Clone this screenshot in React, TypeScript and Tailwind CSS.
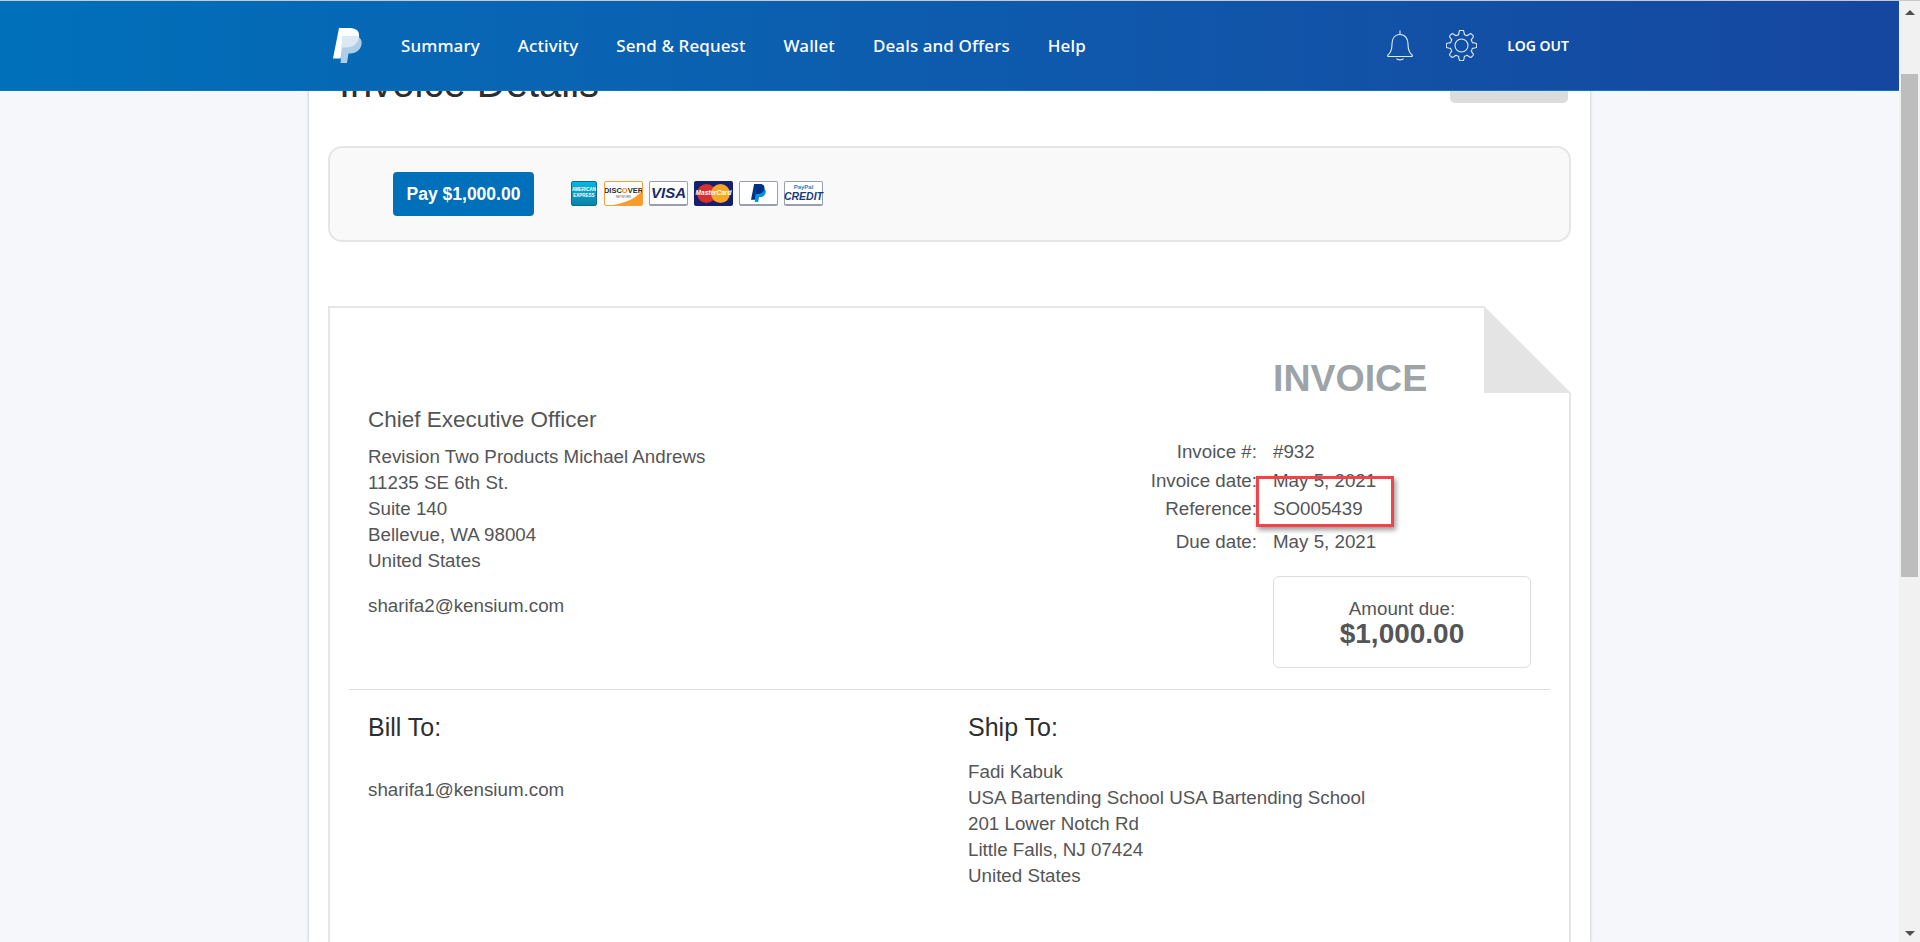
const navItems = ['Summary', 'Activity', 'Send & Request', 'Wallet', 'Deals and Offers', 'Help'];
const senderLines = ['Revision Two Products Michael Andrews', '11235 SE 6th St.', 'Suite 140', 'Bellevue, WA 98004', 'United States'];
const shipLines = ['Fadi Kabuk', 'USA Bartending School USA Bartending School', '201 Lower Notch Rd', 'Little Falls, NJ 07424', 'United States'];

const frontP = 'M6 0H17C23.5 0 27 3.5 26 9.5C25 15.5 20 19.5 13.5 19.5H9.5L7.5 30.5H0Z';
const rearP = 'M9.5 8H20.5C26 8 29.5 11 28.5 16.5C27.5 22 23 25.5 17.5 25.5H15.5L14 35H7.5Z';

// 8 rounded teeth, same outline as the settings icon in the reference
function gearPath(cx: number, cy: number, outer: number, inner: number) {
	const points: string[] = [];
	for (let i = 0; i < 96; i++) {
		const a = (i / 96) * Math.PI * 2;
		const wave = Math.max(-0.75, Math.min(0.75, Math.cos(a * 8) * 1.5)) / 0.75;
		const r = inner + ((outer - inner) * (wave + 1)) / 2;
		points.push(`${(cx + r * Math.cos(a)).toFixed(2)} ${(cy + r * Math.sin(a)).toFixed(2)}`);
	}
	return `M${points.join('L')}Z`;
}

function Logo() {
	return (
		<svg viewBox="0 0 29 35" className="h-[35px] w-[29px] shrink-0">
			<defs>
				<clipPath id="front-p">
					<path d={frontP} />
				</clipPath>
			</defs>
			<path d={frontP} fill="#ffffff" />
			<path d={rearP} fill="#aecde8" />
			<path d={rearP} fill="#dde8f5" clipPath="url(#front-p)" />
		</svg>
	);
}

function Bell() {
	return (
		<svg viewBox="0 0 26 31" className="h-[31px] w-[26px]" fill="none" stroke="#dfeafa" strokeWidth="1.1">
			<path d="M13 0.5V4.5" />
			<path d="M13 4.5C7.5 4.5 5 9 5 14C5 20 3.5 23 1 25C0.3 25.6 0.6 26.5 1.5 26.5H24.5C25.4 26.5 25.7 25.6 25 25C22.5 23 21 20 21 14C21 9 18.5 4.5 13 4.5Z" />
			<path d="M9.5 28.5C10.5 30.3 15.5 30.3 16.5 28.5" />
		</svg>
	);
}

function Gear() {
	return (
		<svg viewBox="0 0 31 31" className="h-[31px] w-[31px]" fill="none" stroke="#dfeafa" strokeWidth="1.1">
			<path d={gearPath(15.5, 15.5, 15.2, 11.2)} strokeLinejoin="round" />
			<circle cx="15.5" cy="15.5" r="6.5" />
		</svg>
	);
}

function Amex() {
	return (
		<div className="flex h-[25px] w-[26px] flex-col items-center justify-center rounded-[2px] border border-[#0b6d86] bg-linear-to-b from-[#00b7e3] to-[#0a84a8] text-[4.5px] leading-[6px] font-bold text-white">
			<span>AMERICAN</span>
			<span>EXPRESS</span>
		</div>
	);
}

function Discover() {
	return (
		<div className="relative ml-[1px] flex h-[25px] w-[39px] flex-col items-center overflow-hidden rounded-[2px] border border-[#f5a13a] bg-white pt-[4px]">
			<svg viewBox="0 0 37 23" className="absolute inset-0 h-full w-full">
				<path d="M8 23C20 21 30 17 37 9V23Z" fill="#f89a2c" />
			</svg>
			<span className="relative text-[7.5px] leading-[9px] font-bold text-[#2b2b2b]">
				DISC<span className="text-[#f58220]">O</span>VER
			</span>
			<span className="relative text-[3px] leading-[4px] text-[#555555]">NETWORK</span>
		</div>
	);
}

function PlainCard({ children }: { children: React.ReactNode }) {
	return (
		<div className="flex h-[25px] w-[39px] flex-col items-center justify-center rounded-[2px] border border-b-2 border-[#9a9fae] bg-white">
			{children}
		</div>
	);
}

function MasterCard() {
	return (
		<div className="relative flex h-[25px] w-[39px] items-center justify-center rounded-[2px] bg-[#14206e]">
			<div className="h-[19px] w-[19px] rounded-full bg-[#d5322f]" />
			<div className="-ml-[5px] h-[19px] w-[19px] rounded-full bg-[#f6a728]" />
			<span className="absolute text-[6.5px] font-bold text-white italic">MasterCard</span>
		</div>
	);
}

function PayPalMark() {
	return (
		<svg viewBox="0 0 29 35" className="h-[18px] w-[15px]">
			<path d={frontP} fill="#003087" />
			<path d={rearP} fill="#0094d8" />
			<path d={rearP} fill="#002f86" clipPath="url(#front-p)" />
		</svg>
	);
}

function Row({ label, value, className }: { label: string; value: string; className: string }) {
	return (
		<div className={`flex ${className}`}>
			<span className="w-[200px] pr-[16px] text-right">{label}</span>
			<span className="w-[258px]">{value}</span>
		</div>
	);
}

export default function App() {
	return (
		<div className="flex h-[942px] overflow-hidden border-t border-[#c9c9c9] bg-[#f5f7fa] font-['Liberation_Sans',Arial,sans-serif] text-[18.75px] leading-[26px] text-[#545557]">
			<div className="relative min-w-0 flex-1">
				<header className="absolute inset-x-0 top-0 z-10 flex h-[90px] items-center border-b border-[#0b78c4] bg-linear-to-r from-[#0070ba] to-[#1546a0] pr-[330px] pl-[333px] font-['Noto_Sans',sans-serif] text-white">
					<Logo />
					<nav className="ml-[39px] flex items-center gap-[38px] text-[17px] font-medium tracking-[0.1px]">
						{navItems.map((item) => (
							<span key={item}>{item}</span>
						))}
					</nav>
					<div className="ml-auto flex items-center">
						<Bell />
						<div className="ml-[33px]">
							<Gear />
						</div>
						<span className="ml-[30px] text-[14px] font-semibold">LOG OUT</span>
					</div>
				</header>

				<main className="mx-auto h-full w-[1281px] bg-white px-[19px] pt-[55px] shadow-[0_0_3px_rgba(60,70,90,0.35)]">
					<div className="flex items-end justify-between pl-[11px]">
						<h1 className="text-[40px] leading-[54px] text-[#2c2e2f]">Invoice Details</h1>
						<div className="mr-[3px] mb-[7px] h-[47px] w-[118px] rounded-[5px] bg-[#dcdcdc]" />
					</div>

					<div className="mt-[36px] flex h-[96px] items-center rounded-[14px] border-2 border-[#e6e6e6] bg-[#f9f9f9] pr-[40px] pl-[63px]">
						<button className="h-[44px] w-[141px] rounded-[4px] bg-[#0070ba] text-[17.5px] font-bold text-white">
							Pay $1,000.00
						</button>
						<div className="mt-[-2px] ml-[37px] flex gap-[6px]">
							<Amex />
							<Discover />
							<PlainCard>
								<span className="text-[15px] leading-none font-bold text-[#1a2a6c] italic">VISA</span>
							</PlainCard>
							<MasterCard />
							<PlainCard>
								<PayPalMark />
							</PlainCard>
							<PlainCard>
								<span className="text-[6px] leading-[7px] font-bold text-[#1f7fc4]">PayPal</span>
								<span className="text-[10.5px] leading-[10px] font-bold text-[#1a3a80] italic">CREDIT</span>
							</PlainCard>
						</div>
					</div>

					<div className="relative mt-[64px] h-[700px] border-2 border-[#e6e6e6] bg-white">
						<svg viewBox="0 0 87 87" className="absolute -top-[2px] -right-[2px] h-[87px] w-[87px] bg-white">
							<path d="M0 0L87 87H0Z" fill="#e4e4e4" />
						</svg>

						<div className="flex justify-between pr-[38px] pl-[38px]">
							<div className="pt-[97px]">
								<h2 className="text-[22.5px] leading-[30px]">Chief Executive Officer</h2>
								<div className="mt-[9px]">
									{senderLines.map((line) => (
										<div key={line}>{line}</div>
									))}
								</div>
								<div className="mt-[19px]">sharifa2@kensium.com</div>
							</div>

							<div className="w-[458px] pt-[48px]">
								<div className="pl-[200px] text-[37.5px] leading-[44px] font-bold text-[#9da3a6]">INVOICE</div>
								<Row label="Invoice #:" value="#932" className="mt-[39px]" />
								<Row label="Invoice date:" value="May 5, 2021" className="mt-[3px]" />
								<Row label="Reference:" value="SO005439" className="mt-[2px]" />
								<Row label="Due date:" value="May 5, 2021" className="mt-[7px]" />
								<div className="mt-[21px] ml-[200px] h-[92px] w-[258px] rounded-[6px] border border-[#dddddd] pt-[21px] text-center">
									<div className="leading-[21px]">Amount due:</div>
									<div className="text-[28px] leading-[30px] font-bold">$1,000.00</div>
								</div>
							</div>
						</div>

						<div className="mx-[19px] mt-[21px] border-t border-[#dddddd]" />

						<div className="grid grid-cols-[600px_1fr] pt-[22px] pl-[38px]">
							<div>
								<h2 className="text-[25px] leading-[30px] text-[#2c2e2f]">Bill To:</h2>
								<div className="mt-[35px]">sharifa1@kensium.com</div>
							</div>
							<div>
								<h2 className="text-[25px] leading-[30px] text-[#2c2e2f]">Ship To:</h2>
								<div className="mt-[17px]">
									{shipLines.map((line) => (
										<div key={line}>{line}</div>
									))}
								</div>
							</div>
						</div>

						{/* red annotation drawn over the invoice */}
						<div className="absolute top-[168px] left-[926px] h-[51px] w-[138px] border-[3px] border-[#f0444a] shadow-[2px_3px_5px_rgba(0,0,0,0.4)]" />
					</div>
				</main>
			</div>

			<div className="flex w-[21px] shrink-0 flex-col items-center bg-[#f1f1f1]">
				<div className="mt-[9px] h-0 w-0 border-x-[5px] border-b-[5px] border-x-transparent border-b-[#505050]" />
				<div className="mt-[59px] h-[503px] w-[17px] bg-[#bdbdbd]" />
				<div className="mt-auto mb-[6px] h-0 w-0 border-x-[5px] border-t-[5px] border-x-transparent border-t-[#505050]" />
			</div>
		</div>
	);
}
